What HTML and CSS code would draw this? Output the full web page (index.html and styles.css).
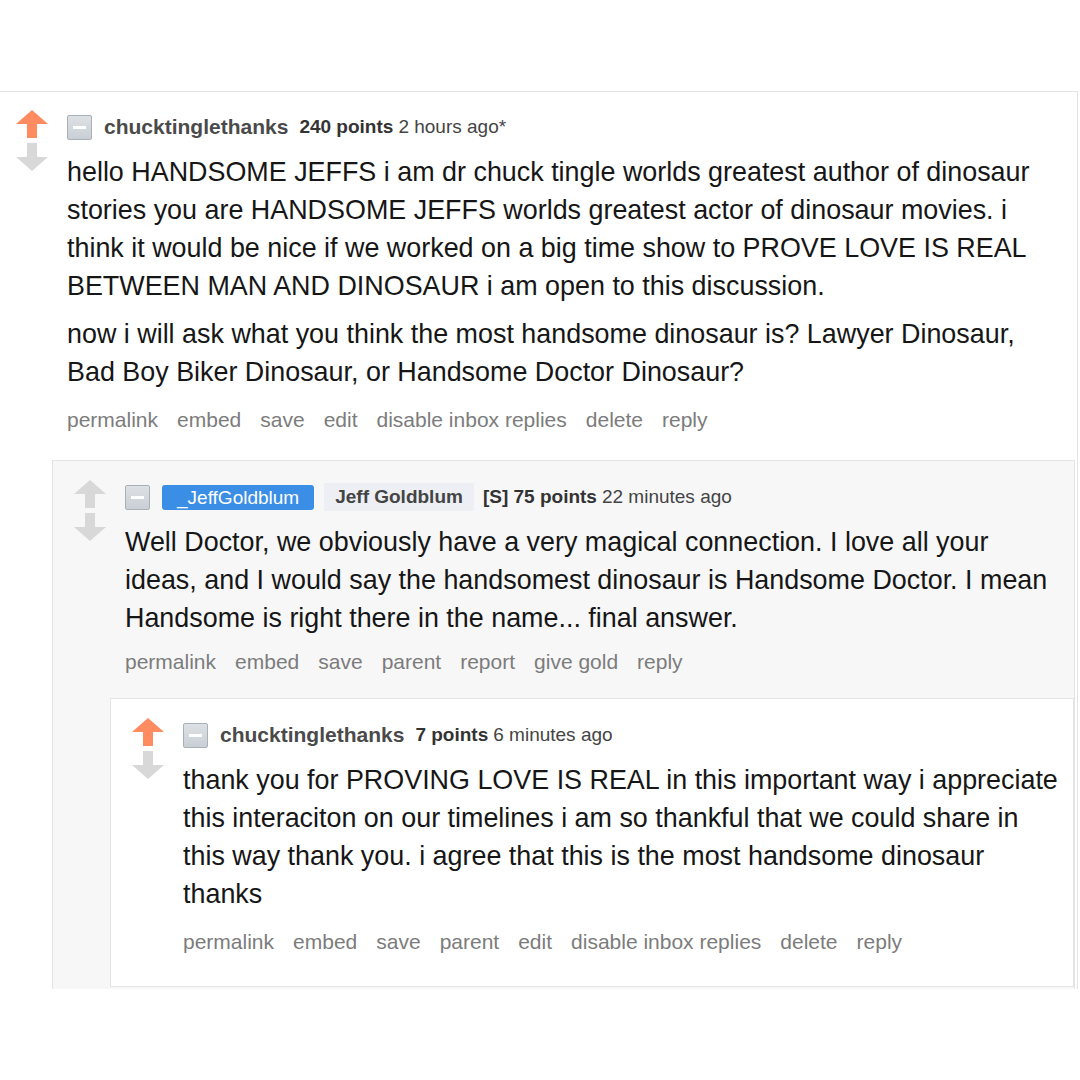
FILE: index.html
```html
<!DOCTYPE html>
<html lang="en">
<head>
  <meta charset="UTF-8">
  <meta name="viewport" content="width=device-width, initial-scale=1.0">
  <title>Comments</title>
  <link rel="stylesheet" href="styles.css">
</head>
<body>
  <div class="comment top">
    <div class="entry">
      <div class="votes">
        <svg class="arrow up" viewBox="0 0 32 28"><polygon points="16,0 32,14 21,14 21,28 11,28 11,14 0,14"/></svg>
        <svg class="arrow down" viewBox="0 0 32 28"><polygon points="16,28 32,14 21,14 21,0 11,0 11,14 0,14"/></svg>
      </div>
      <div class="content">
        <div class="tagline">
          <span class="expand"></span>
          <span class="author">chucktinglethanks</span>
          <span class="score">240 points</span>
          <span class="time">2 hours ago*</span>
        </div>
        <div class="body">
          <p>hello HANDSOME JEFFS i am dr chuck tingle worlds greatest author of dinosaur stories you are HANDSOME JEFFS worlds greatest actor of dinosaur movies. i think it would be nice if we worked on a big time show to PROVE LOVE IS REAL BETWEEN MAN AND DINOSAUR i am open to this discussion.</p>
          <p>now i will ask what you think the most handsome dinosaur is? Lawyer Dinosaur, Bad Boy Biker Dinosaur, or Handsome Doctor Dinosaur?</p>
        </div>
        <ul class="buttons">
          <li>permalink</li><li>embed</li><li>save</li><li>edit</li><li>disable inbox replies</li><li>delete</li><li>reply</li>
        </ul>
      </div>
    </div>

    <div class="comment child shaded">
      <div class="entry">
        <div class="votes">
          <svg class="arrow" viewBox="0 0 32 28"><polygon points="16,0 32,14 21,14 21,28 11,28 11,14 0,14"/></svg>
          <svg class="arrow down" viewBox="0 0 32 28"><polygon points="16,28 32,14 21,14 21,0 11,0 11,14 0,14"/></svg>
        </div>
        <div class="content">
          <div class="tagline">
            <span class="expand"></span>
            <span class="submitter">_JeffGoldblum</span>
            <span class="flair">Jeff Goldblum</span>
            <span class="score">[S] 75 points</span>
            <span class="time">22 minutes ago</span>
          </div>
          <div class="body">
            <p>Well Doctor, we obviously have a very magical connection. I love all your ideas, and I would say the handsomest dinosaur is Handsome Doctor. I mean Handsome is right there in the name... final answer.</p>
          </div>
          <ul class="buttons">
            <li>permalink</li><li>embed</li><li>save</li><li>parent</li><li>report</li><li>give gold</li><li>reply</li>
          </ul>
        </div>
      </div>

      <div class="comment child last">
        <div class="entry">
          <div class="votes">
            <svg class="arrow up" viewBox="0 0 32 28"><polygon points="16,0 32,14 21,14 21,28 11,28 11,14 0,14"/></svg>
            <svg class="arrow down" viewBox="0 0 32 28"><polygon points="16,28 32,14 21,14 21,0 11,0 11,14 0,14"/></svg>
          </div>
          <div class="content">
            <div class="tagline">
              <span class="expand"></span>
              <span class="author">chucktinglethanks</span>
              <span class="score">7 points</span>
              <span class="time">6 minutes ago</span>
            </div>
            <div class="body">
              <p>thank you for PROVING LOVE IS REAL in this important way i appreciate this interaciton on our timelines i am so thankful that we could share in this way thank you. i agree that this is the most handsome dinosaur thanks</p>
            </div>
            <ul class="buttons">
              <li>permalink</li><li>embed</li><li>save</li><li>parent</li><li>edit</li><li>disable inbox replies</li><li>delete</li><li>reply</li>
            </ul>
          </div>
        </div>
      </div>
    </div>
  </div>
</body>
</html>
```

FILE: styles.css
```css
body {
  margin: 0;
  background: #fff;
  font-family: "Liberation Sans", Arial, sans-serif;
  color: #222;
}

.comment {
  border: 1px solid #e4e4e4;
  border-bottom: none;
  background: #fff;
  padding-left: 21px;
}

.comment.top {
  margin: 91px 2px 0 -6px;
}

.comment.child {
  margin: 28px 2px 0 36px;
}

.comment.shaded {
  background: #f7f7f8;
  padding-bottom: 2px;
}

.comment.last {
  margin: 24px 0 0 36px;
  border-bottom: 1px solid #e4e4e4;
  padding-bottom: 32px;
}

.entry {
  display: grid;
  grid-template-columns: 51px 1fr;
  padding: 18px 13px 0 0;
}

.shaded > .entry,
.last > .entry {
  padding-top: 19px;
}

.votes {
  display: flex;
  flex-direction: column;
  gap: 5px;
}

.arrow {
  width: 32px;
  height: 28px;
  fill: #d8d8d8;
}

.arrow.up {
  fill: #ff8b60;
}

.content {
  padding-top: 4px;
}

.tagline {
  display: flex;
  align-items: center;
  height: 26px;
  font-size: 19px;
  color: #444;
}

.expand {
  position: relative;
  width: 23px;
  height: 23px;
  margin-right: 12px;
  border: 1px solid #a9b1b8;
  border-radius: 2px;
  background: linear-gradient(#dde1e5, #c9cfd5);
}

.expand::after {
  content: "";
  position: absolute;
  left: 5px;
  right: 5px;
  top: 10px;
  height: 3px;
  background: #fff;
}

.author {
  font-size: 21px;
  font-weight: bold;
  color: #4a4a4a;
  margin-right: 11px;
}

.submitter {
  color: #fff;
  background: #3b8ee6;
  border-radius: 3px;
  padding: 0 15px;
  line-height: 25px;
  margin-right: 10px;
}

.flair {
  font-weight: bold;
  color: #444;
  background: #edeff5;
  padding: 0 11px;
  line-height: 28px;
  margin-right: 9px;
}

.score {
  font-weight: bold;
  color: #333;
  margin-right: 5px;
}

.time {
  color: #444;
}

.body {
  margin-top: 13px;
  font-size: 26.9px;
  line-height: 38px;
  color: #161616;
}

.body p {
  margin: 0 0 10px;
}

.body p:last-child {
  margin-bottom: 0;
}

.buttons {
  display: flex;
  gap: 19px;
  list-style: none;
  margin: 17px 0 0;
  padding: 0;
  font-size: 21px;
  line-height: 24px;
  color: #7c7c7c;
}

.shaded > .entry .buttons {
  margin-top: 13px;
}
```
